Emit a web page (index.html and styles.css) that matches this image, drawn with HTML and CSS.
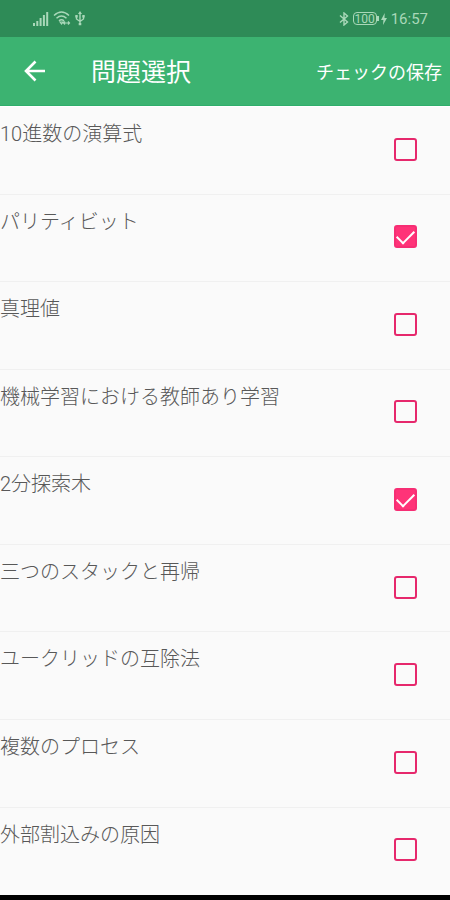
FILE: index.html
```html
<!DOCTYPE html>
<html lang="ja">
<head>
<meta charset="utf-8">
<meta name="viewport" content="width=device-width, initial-scale=1">
<title>問題選択</title>
<link rel="stylesheet" href="styles.css">
</head>
<body>
<div class="status">
  <div class="status-group">
    <svg width="16" height="14" viewBox="0 0 16 14" fill="currentColor" aria-hidden="true"><path d="M0 11h2v3H0zM3.300 9h2v5h-2zM6.600 6h2v8h-2zM9.900 3h2v11h-2zM13.200 0h2v14h-2z"/></svg>
    <svg width="18" height="15" viewBox="0 0 18 15" fill="none" stroke="currentColor" stroke-width="1.500" aria-hidden="true"><path d="M1 4.500Q8.500-2.500 16 4.500M3.500 7.200Q8.500 2.800 13.500 7.200M6 9.800Q8.500 7.800 11 9.800"/><path d="M7 11l1.500 2 1.500-2zM10.500 12h6M12 10.500L10.500 12l1.500 1.500M15 10.500l1.500 1.500-1.500 1.500" stroke-width="1.200"/></svg>
    <svg width="10" height="15" viewBox="0 0 10 15" fill="none" stroke="currentColor" stroke-width="1.400" aria-hidden="true"><path d="M5 2v11M1.500 5v3L5 10.500 8.500 8V5"/><path d="M5 0l2 3H3zM.3 4h2.400v2.400H.3zM7.300 4h2.400v2.400H7.300zM3.700 12h2.600v2.300H3.700z" fill="currentColor" stroke="none"/></svg>
  </div>
  <div class="status-group">
    <svg width="10" height="14" viewBox="0 0 10 14" fill="none" stroke="currentColor" stroke-width="1.400" aria-hidden="true"><path d="M1 3.500l7.500 6.500L5 13V1l3.500 3L1 10.500"/></svg>
    <span class="battery">100</span>
    <svg width="6" height="12" viewBox="0 0 6 12" fill="currentColor" aria-hidden="true"><path d="M3.700 0L0 7h2.400L2 12 6 5H3.500z"/></svg>
    <span class="time">16:57</span>
  </div>
</div>
<header class="bar">
  <button class="back" type="button" aria-label="戻る">
    <svg width="22" height="22" viewBox="0 0 22 22" fill="none" stroke="currentColor" stroke-width="2.600" aria-hidden="true"><path d="M21 11H2.500M11.500 1.500L2 11l9.500 9.500"/></svg>
  </button>
  <h1 class="title">問題選択</h1>
  <button class="save" type="button">チェックの保存</button>
</header>
<main class="list">
  <label class="row"><span class="name">10進数の演算式</span><input class="check" type="checkbox"></label>
  <label class="row"><span class="name">パリティビット</span><input class="check" type="checkbox" checked></label>
  <label class="row"><span class="name">真理値</span><input class="check" type="checkbox"></label>
  <label class="row"><span class="name">機械学習における教師あり学習</span><input class="check" type="checkbox"></label>
  <label class="row"><span class="name">2分探索木</span><input class="check" type="checkbox" checked></label>
  <label class="row"><span class="name">三つのスタックと再帰</span><input class="check" type="checkbox"></label>
  <label class="row"><span class="name">ユークリッドの互除法</span><input class="check" type="checkbox"></label>
  <label class="row"><span class="name">複数のプロセス</span><input class="check" type="checkbox"></label>
  <label class="row"><span class="name">外部割込みの原因</span><input class="check" type="checkbox"></label>
</main>
</body>
</html>
```
FILE: styles.css
```css
* {
  box-sizing: border-box;
}

body {
  display: flex;
  flex-direction: column;
  min-height: 100vh;
  margin: 0;
  border-bottom: 5px solid #000;
  background: #fafafa;
  font-family: Roboto, "Noto Sans CJK JP", sans-serif;
}

.status {
  display: flex;
  justify-content: space-between;
  align-items: center;
  height: 37px;
  padding: 0 22px 0 33px;
  background: #2e8b57;
  color: #a9d8b9;
}

.status-group {
  display: flex;
  align-items: center;
  gap: 4px;
}

.battery {
  position: relative;
  width: 24px;
  height: 13px;
  border: 1px solid currentColor;
  border-radius: 4px;
  font-size: 12px;
  line-height: 12px;
  text-align: center;
}

.battery::after {
  content: "";
  position: absolute;
  top: 3px;
  right: -3px;
  width: 2px;
  height: 5px;
  background: currentColor;
}

.time {
  font-size: 15px;
  line-height: 20px;
}

.bar {
  display: flex;
  align-items: center;
  height: 69px;
  padding: 0 8px 0 24px;
  border-bottom: 1px solid #2fae6b;
  background: #3cb371;
  color: #fff;
}

.back,
.save {
  padding: 0;
  border: 0;
  background: none;
  color: inherit;
  font-family: inherit;
}

.back {
  display: flex;
  width: 67px;
}

.title {
  flex: 1;
  margin: 0;
  padding-top: 4px;
  font-size: 25px;
  font-weight: 400;
  line-height: 36px;
}

.save {
  padding-top: 4px;
  font-size: 18px;
  line-height: 26px;
}

.list {
  display: flex;
  flex: 1;
  flex-direction: column;
  padding-bottom: 1px;
}

.row {
  display: flex;
  flex: 1 0 80px;
  align-items: center;
  padding: 0 33px 2px 0;
  border-top: 1px solid #f0f0f0;
}

.row:first-child {
  border-top-color: #fff;
}

.name {
  flex: 1;
  align-self: flex-start;
  padding-top: 12px;
  color: #585858;
  font-size: 20px;
  font-weight: 300;
  line-height: 30px;
}

.check {
  appearance: none;
  width: 23px;
  height: 23px;
  margin: 0;
  border: 2px solid #e6286c;
  border-radius: 3px;
}

.check:checked {
  display: grid;
  place-items: center;
  border-color: #f62e74;
  background: #ff3378;
}

.check:checked::before {
  content: "";
  width: 15px;
  height: 8px;
  margin-bottom: 4px;
  border: solid #fff;
  border-width: 0 0 2px 2px;
  transform: rotate(-45deg);
}
```
